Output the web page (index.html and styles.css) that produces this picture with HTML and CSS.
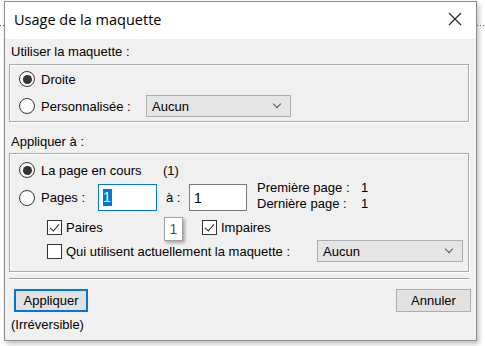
FILE: index.html
```html
<!DOCTYPE html>
<html lang="fr">
<head>
  <meta charset="UTF-8" />
  <title>Usage de la maquette</title>
  <link rel="stylesheet" href="styles.css">
</head>
<body>
  <div class="window">
    <div class="titlebar">
      <span class="title">Usage de la maquette</span>
      <svg class="close" width="14" height="14" viewBox="0 0 14 14">
        <path d="M1 1 L13 13 M13 1 L1 13" stroke="#222" stroke-width="1.1" fill="none"/>
      </svg>
    </div>

    <div class="content">
      <div class="caption cap1">Utiliser la maquette :</div>
      <div class="group group1">
        <div class="row r22">
          <span class="radio checked"></span>
          <span class="lbl">Droite</span>
        </div>
        <div class="row r22 gap5">
          <span class="radio"></span>
          <span class="lbl w-perso">Personnalisée :</span>
          <div class="select sel1"><span>Aucun</span><span class="chev"></span></div>
        </div>
      </div>

      <div class="caption cap2">Appliquer à :</div>
      <div class="group group2">
        <div class="row r22">
          <span class="radio checked"></span>
          <span class="lbl w-cours">La page en cours</span>
          <span class="lbl">(1)</span>
        </div>
        <div class="row r27 gap3">
          <span class="radio"></span>
          <span class="lbl w-pages">Pages :</span>
          <div class="field focus"><span class="sel-text">1</span></div>
          <span class="lbl w-a">à :</span>
          <div class="field f2">1</div>
          <div class="info">
            <div><span class="info-k">Première page :</span>1</div>
            <div><span class="info-k">Dernière page :</span>1</div>
          </div>
        </div>
        <div class="row r22 gap5 sub">
          <span class="check on"></span>
          <span class="lbl w-paires">Paires</span>
          <div class="tip">1</div>
          <span class="check on"></span>
          <span class="lbl">Impaires</span>
        </div>
        <div class="row r22 gap2 sub">
          <span class="check"></span>
          <span class="lbl w-qui">Qui utilisent actuellement la maquette :</span>
          <div class="select sel2"><span>Aucun</span><span class="chev"></span></div>
        </div>
      </div>

      <div class="sep"></div>

      <div class="buttons">
        <button class="btn default">Appliquer</button>
        <button class="btn">Annuler</button>
      </div>
      <div class="note">(Irréversible)</div>
    </div>
  </div>
</body>
</html>
```

FILE: styles.css
```css
body {
  margin: 0;
  background-color: #fff;
  background-image: linear-gradient(to right, #666 1px, transparent 1px);
  background-size: 3px 1px;
  background-repeat: repeat-x;
  background-position: 0 25px;
  font-family: "Liberation Sans", Arial, sans-serif;
  font-size: 13px;
  color: #000;
  height: 346px;
  overflow: hidden;
}

.window {
  margin: 1px 0 0 4px;
  width: 471px;
  height: 338px;
  border: 1px solid #8c8c8c;
  background: #f0f0f0;
  box-shadow: 2px 3px 5px rgba(0, 0, 0, 0.25);
  display: flex;
  flex-direction: column;
}

.titlebar {
  height: 37px;
  background: #fff;
  display: flex;
  align-items: center;
  justify-content: space-between;
  padding: 0 14px 0 9px;
}
.title {
  font-family: "Open Sans", "Noto Sans", sans-serif;
  font-size: 14.5px;
  color: #000;
  margin-top: -2px;
}
.close { margin-top: -3px; }

.content {
  padding: 0 7px 0 4px;
}

.caption {
  height: 20px;
  line-height: 20px;
  padding-left: 2px;
}
.cap1 { margin-top: 3px; }
.cap2 { margin-top: 10px; }

.group {
  border: 1px solid #a9a9a9;
  box-shadow: inset 1px 1px 0 #fff, 1px 1px 0 #fff;
}
.group1 {
  margin-top: 2px;
  padding: 3px 0 4px 9px;
}
.group2 {
  margin-top: 1px;
  padding: 5px 0 9px 9px;
}

.row {
  display: flex;
  align-items: center;
}
.r22 { height: 22px; }
.r27 { height: 27px; }
.gap2 { margin-top: 2px; }
.gap3 { margin-top: 3px; }
.gap5 { margin-top: 5px; }
.sub { padding-left: 28px; }

.radio {
  width: 14px;
  height: 14px;
  border: 1px solid #333;
  border-radius: 50%;
  background: #fff;
  position: relative;
  margin-right: 6px;
  flex: none;
}
.radio.checked::after {
  content: "";
  position: absolute;
  left: 2.5px;
  top: 2.5px;
  width: 9px;
  height: 9px;
  border-radius: 50%;
  background: #333;
}

.check {
  width: 13px;
  height: 13px;
  border: 1px solid #333;
  background: #fff;
  position: relative;
  margin-right: 4px;
  flex: none;
}
.check.on::after {
  content: "";
  position: absolute;
  left: 4px;
  top: 1px;
  width: 4px;
  height: 8px;
  border: solid #222;
  border-width: 0 1px 1px 0;
  transform: rotate(40deg);
}

.w-perso { width: 105px; }
.w-cours { width: 122px; }
.w-pages { width: 57px; }
.w-a { width: 32px; padding-left: 9px; box-sizing: border-box; }
.w-paires { width: 98px; }
.w-qui { width: 251px; }

.select {
  height: 20px;
  border: 1px solid #adadad;
  background: #e5e5e5;
  display: flex;
  align-items: center;
  justify-content: space-between;
  padding: 0 10px 0 5px;
  box-sizing: content-box;
}
.sel1 { width: 128px; }
.sel2 { width: 129px; }
.chev {
  width: 5px;
  height: 5px;
  border: solid #555;
  border-width: 0 1px 1px 0;
  transform: rotate(45deg);
  margin-top: -4px;
}

.field {
  height: 25px;
  border: 1px solid #7a7a7a;
  background: #fff;
  display: flex;
  align-items: center;
  padding-left: 4px;
  box-sizing: content-box;
  font-size: 14px;
}
.field.focus {
  width: 53px;
  border-color: #0078d7;
}
.f2 { width: 52px; }
.sel-text {
  background: #0078d7;
  color: #fff;
  line-height: 17px;
  padding: 0 1px 0 0;
}

.info {
  margin-left: 10px;
  line-height: 16px;
  margin-top: -3px;
}
.info-k {
  display: inline-block;
  width: 104px;
}

.tip {
  width: 19px;
  height: 24px;
  border: 1px solid #a0a0a0;
  background: #fff;
  box-shadow: 2px 2px 3px rgba(0, 0, 0, 0.3);
  display: flex;
  align-items: center;
  justify-content: center;
  color: #555;
  font-size: 14px;
  margin-right: 19px;
  margin-top: 4px;
  box-sizing: border-box;
}

.sep {
  margin-top: 6px;
  height: 1px;
  background: #a0a0a0;
  border-bottom: 1px solid #fff;
}

.buttons {
  display: flex;
  justify-content: space-between;
  margin-top: 9px;
  padding-left: 5px;
}
.btn {
  font: inherit;
  height: 23px;
  width: 75px;
  border: 1px solid #adadad;
  background: #e1e1e1;
  color: #000;
  padding: 0;
  margin-right: -2px;
}
.btn.default {
  width: 74px;
  border: 2px solid #0078d7;
  margin-right: 0;
}

.note {
  margin-top: 5px;
  padding-left: 2px;
  line-height: 16px;
}
```
